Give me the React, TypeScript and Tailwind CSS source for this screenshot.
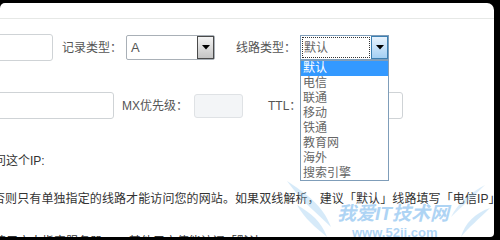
import React from "react";

const font = { fontFamily: '"Liberation Sans","Noto Sans CJK SC",sans-serif' };

function Arrow() {
  return (
    <svg width="8" height="5" viewBox="0 0 8 5">
      <path d="M0 0 H8 L4 4.5 Z" fill="#000" />
    </svg>
  );
}

const items = ["默认", "电信", "联通", "移动", "铁通", "教育网", "海外", "搜索引擎"];

export default function App() {
  return (
    <div className="w-[500px] h-[240px] bg-black overflow-hidden" style={font}>
      <div className="relative mt-[3px] w-[494px] h-[234px] bg-white rounded-tl-[5px] rounded-tr-[7px] rounded-br-[4px] overflow-hidden">
        <div className="h-[16px] border-b border-[#e6e8e6]" />

        {/* Row 1 */}
        <div className="mt-[15px] flex items-center h-[27px] text-[12px] text-[#555]">
          <div className="ml-[-10px] w-[63px] h-[27px] border border-[#cfd3d6] rounded-[3px] bg-white" />
          <div className="ml-[9px] w-[60px] leading-[16px]">记录类型：</div>
          <div className="ml-[4px] w-[89px] h-[25px] border border-[#a9b0b7] rounded-[2px] flex items-stretch bg-white">
            <div className="flex-1 pl-[4px] flex items-center text-[13px] text-[#555]">A</div>
            <div className="w-[17px] border border-[#4a4a4a] bg-gradient-to-b from-[#f4f4f4] to-[#c4c4c4] flex items-center justify-center">
              <Arrow />
            </div>
          </div>
          <div className="ml-[21px] w-[60px] leading-[16px]">线路类型：</div>
          <div className="relative ml-[4px] w-[89px] h-[25px] border border-[#7f9db9] flex items-stretch bg-white">
            <div className="flex-1 m-[1px] border border-dotted border-[#333] pl-[1px] flex items-center text-[12px] text-[#666]">默认</div>
            <div className="w-[17px] border border-[#3c7fb1] bg-gradient-to-b from-[#e8f3fd] to-[#a4d0f4] flex items-center justify-center">
              <Arrow />
            </div>
            <div className="absolute z-10 left-[-1px] top-[24px] w-[89px] h-[121px] border border-[#7f9db9] bg-white flex flex-col">
              {items.map((t, i) => (
                <div
                  key={t}
                  className={
                    i === 0
                      ? "h-[15px] leading-[15px] pl-[2px] text-[12px] bg-[#3399ff] text-white"
                      : "h-[15px] leading-[15px] pl-[2px] text-[12px] text-[#666]"
                  }
                >
                  {t}
                </div>
              ))}
            </div>
          </div>
        </div>

        {/* Row 2 */}
        <div className="mt-[31px] flex items-center h-[27px] text-[12px] text-[#555]">
          <div className="ml-[-10px] w-[124px] h-[27px] border border-[#cfd3d6] rounded-[3px] bg-white" />
          <div className="ml-[8px] w-[66px] leading-[16px]">MX优先级：</div>
          <div className="ml-[6px] w-[49px] h-[24px] border border-[#dfe2e5] rounded-[3px] bg-[#f3f5f7]" />
          <div className="ml-[25px] w-[32px] leading-[16px]">TTL：</div>
          <div className="ml-[0px] w-[103px] h-[27px] border border-[#cfd3d6] rounded-[3px] bg-white" />
        </div>

        {/* Text lines */}
        <div className="mt-[32px] ml-[-6px] h-[20px] leading-[20px] text-[12px] text-[#333] whitespace-nowrap">问这个IP:</div>
        <div className="mt-[18px] ml-[-7px] h-[20px] leading-[20px] text-[12px] text-[#333] whitespace-nowrap tracking-[0.1px]">
          否则只有单独指定的线路才能访问您的网站。如果双线解析，建议「默认」线路填写「电信IP」
        </div>
        <div className="mt-[23px] ml-[-6px] h-[20px] leading-[20px] text-[12px] text-[#333] whitespace-nowrap">
          请用户人指定服务器 IP，其他用户使能访问「默认」
        </div>

        {/* Watermark */}
        <div className="absolute left-[285px] top-[150px] w-[210px] h-[90px] pointer-events-none opacity-50">
          <svg width="210" height="90" viewBox="0 0 210 90" className="absolute left-0 top-0">
            <path d="M2 28 C20 40 38 52 46 74 C32 60 18 50 2 28 Z" fill="#8cc4ee" opacity="0.7" />
            <path d="M12 52 C26 60 36 68 42 84 C30 74 20 66 12 52 Z" fill="#8cc4ee" opacity="0.7" />
            <path d="M205 55 C190 60 180 70 176 84 C184 74 194 66 205 55 Z" fill="#8cc4ee" opacity="0.7" />
            <path d="M200 32 C185 40 173 50 166 64 C176 54 188 44 200 32 Z" fill="#8cc4ee" opacity="0.6" />
          </svg>
          <div className="absolute left-[52px] top-[50px] text-[19px] leading-[22px] font-bold italic text-[#5eaaea]">我爱IT技术网</div>
          <div className="absolute left-[67px] top-[73px] text-[13px] leading-[14px] font-bold text-[#5eaaea]">www.52ij.com</div>
        </div>
      </div>
    </div>
  );
}
